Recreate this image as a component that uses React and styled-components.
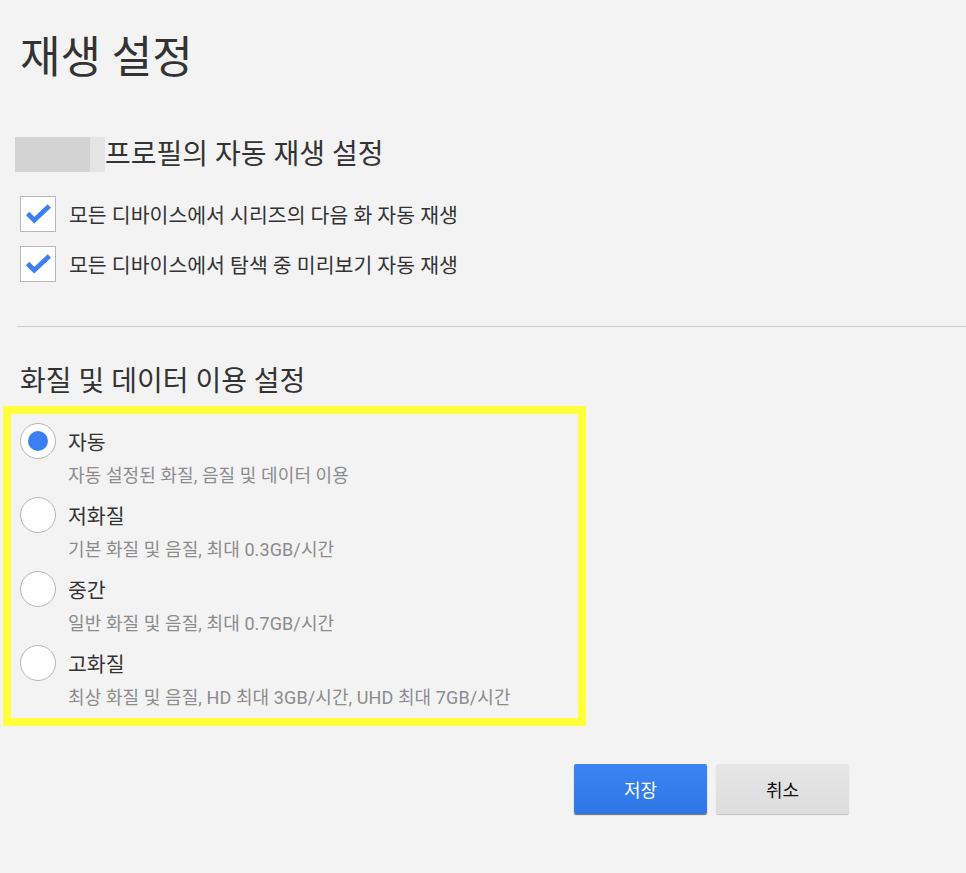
import React from 'react';
import styled, { createGlobalStyle } from 'styled-components';

const GlobalStyle = createGlobalStyle`
  html, body {
    margin: 0;
    padding: 0;
    background: #f3f3f3;
  }
  body {
    font-family: Roboto, "Noto Sans CJK KR", "Noto Sans", sans-serif;
    color: #333;
  }
`;

const Page = styled.div`
  padding: 34px 0 40px 20px;
  min-height: 873px;
  box-sizing: border-box;
`;

const Title = styled.h1`
  margin: 0;
  font-size: 44px;
  line-height: 48px;
  font-weight: 400;
  color: #333;
`;

const ProfileHeader = styled.div`
  display: flex;
  align-items: center;
  margin: 55px 0 0 -5px;
  height: 35px;
`;

const ProfileMask = styled.div`
  width: 75px;
  height: 35px;
  background: #d3d3d3;
  border-right: 15px solid #e4e4e4;
`;

const SectionTitle = styled.h2`
  margin: ${p => p.$top || 0}px 0 0;
  font-size: 28px;
  line-height: 34px;
  font-weight: 400;
  color: #333;
`;

const CheckList = styled.div`
  display: flex;
  flex-direction: column;
  gap: 14px;
  margin-top: 24px;
`;

const CheckRow = styled.label`
  display: flex;
  align-items: center;
  gap: 13px;
  font-size: 20.5px;
  color: #333;
`;

const CheckBox = styled.span`
  width: 36px;
  height: 36px;
  box-sizing: border-box;
  border: 1.5px solid #b8b8b8;
  background: #fff;
  display: flex;
  align-items: center;
  justify-content: center;
`;

const Divider = styled.hr`
  margin: 44px 0 0 -3px;
  border: 0;
  height: 1px;
  background: #cdcdcd;
`;

const Highlight = styled.div`
  margin: 7px 0 0 -17px;
  width: 583px;
  box-sizing: border-box;
  border: 8px solid #ffff3c;
  padding: 9px 0 8px 9px;
  display: flex;
  flex-direction: column;
  gap: 9px;
`;

const Option = styled.div`
  display: flex;
  flex-direction: column;
`;

const OptionRow = styled.label`
  display: flex;
  align-items: center;
  gap: 12px;
  font-size: 20.5px;
  color: #333;
  height: 36px;
`;

const Radio = styled.span`
  width: 36px;
  height: 36px;
  box-sizing: border-box;
  border-radius: 50%;
  border: 1.5px solid #b5b5b5;
  background: #fff;
  display: flex;
  align-items: center;
  justify-content: center;
  &::after {
    content: '';
    width: 20px;
    height: 20px;
    border-radius: 50%;
    background: ${p => (p.$checked ? '#3a80f4' : 'transparent')};
  }
`;

const OptionDesc = styled.div`
  margin: 5px 0 0 48px;
  font-size: 18px;
  line-height: 24px;
  letter-spacing: 0.1px;
  color: #8c8c8c;
`;

const ButtonRow = styled.div`
  display: flex;
  gap: 9px;
  margin: 38px 0 0 554px;
`;

const Button = styled.button`
  width: 133px;
  height: 50px;
  border: 0;
  border-radius: 2px;
  font-family: inherit;
  font-size: 18px;
  cursor: pointer;
  color: ${p => (p.$primary ? '#fff' : '#111')};
  background: ${p =>
    p.$primary
      ? 'linear-gradient(180deg, #3b83f4 0%, #2f76e6 100%)'
      : 'linear-gradient(180deg, #e6e6e6 0%, #dddddd 100%)'};
  box-shadow: ${p =>
    p.$primary ? '0 1px 1px rgba(0,0,0,0.55)' : '0 1px 1px rgba(0,0,0,0.2)'};
`;

const CheckMark = () => (
  <svg width="36" height="36" viewBox="0 0 36 36">
    <path d="M7 17.5 L14 24.5 L30 9.5" fill="none" stroke="#3a80f4" strokeWidth="5" strokeLinejoin="miter" />
  </svg>
);

const checks = [
  '모든 디바이스에서 시리즈의 다음 화 자동 재생',
  '모든 디바이스에서 탐색 중 미리보기 자동 재생',
];

const options = [
  { label: '자동', desc: '자동 설정된 화질, 음질 및 데이터 이용', checked: true },
  { label: '저화질', desc: '기본 화질 및 음질, 최대 0.3GB/시간' },
  { label: '중간', desc: '일반 화질 및 음질, 최대 0.7GB/시간' },
  { label: '고화질', desc: '최상 화질 및 음질, HD 최대 3GB/시간, UHD 최대 7GB/시간' },
];

export default function App() {
  return (
    <>
      <GlobalStyle />
      <Page>
        <Title>재생 설정</Title>
        <ProfileHeader>
          <ProfileMask />
          <SectionTitle>프로필의 자동 재생 설정</SectionTitle>
        </ProfileHeader>
        <CheckList>
          {checks.map(text => (
            <CheckRow key={text}>
              <CheckBox>
                <CheckMark />
              </CheckBox>
              {text}
            </CheckRow>
          ))}
        </CheckList>
        <Divider />
        <SectionTitle $top={38}>화질 및 데이터 이용 설정</SectionTitle>
        <Highlight>
          {options.map(o => (
            <Option key={o.label}>
              <OptionRow>
                <Radio $checked={o.checked} />
                {o.label}
              </OptionRow>
              <OptionDesc>{o.desc}</OptionDesc>
            </Option>
          ))}
        </Highlight>
        <ButtonRow>
          <Button $primary>저장</Button>
          <Button>취소</Button>
        </ButtonRow>
      </Page>
    </>
  );
}
